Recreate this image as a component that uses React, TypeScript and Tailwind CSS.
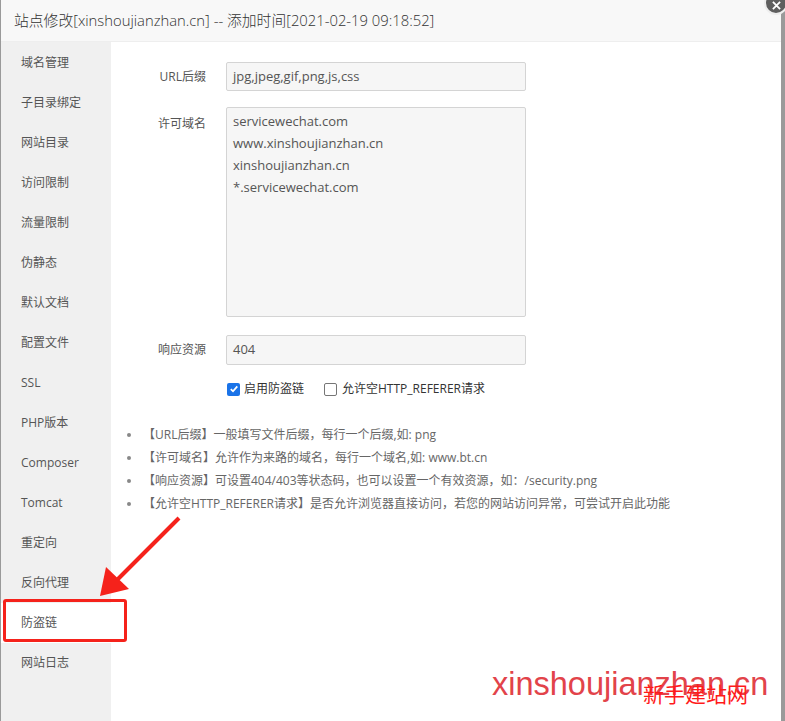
const NAV = [
  "域名管理", "子目录绑定", "网站目录", "访问限制", "流量限制", "伪静态", "默认文档", "配置文件",
  "SSL", "PHP版本", "Composer", "Tomcat", "重定向", "反向代理", "防盗链", "网站日志",
];

const TIPS = [
  "【URL后缀】一般填写文件后缀，每行一个后缀,如: png",
  "【许可域名】允许作为来路的域名，每行一个域名,如: www.bt.cn",
  "【响应资源】可设置404/403等状态码，也可以设置一个有效资源，如：/security.png",
  "【允许空HTTP_REFERER请求】是否允许浏览器直接访问，若您的网站访问异常，可尝试开启此功能",
];

const DOMAINS = ["servicewechat.com", "www.xinshoujianzhan.cn", "xinshoujianzhan.cn", "*.servicewechat.com"];

const font = "font-['Open_Sans','Noto_Sans_CJK_SC',sans-serif]";

export default function App() {
  return (
    <div className={`relative w-[785px] h-[721px] overflow-hidden flex bg-white ${font}`}>
      {/* overlay edges */}
      <div className="w-px bg-[#9a9a9a]" />

      <div className="flex-1 flex flex-col min-w-0">
        {/* Header */}
        <div className="h-[42px] shrink-0 flex items-center pl-[13px] bg-[#f8f8f8] border-b border-[#eeeeee] text-[14.8px] font-light text-[#333]">
          站点修改[xinshoujianzhan.cn] -- 添加时间[2021-02-19 09:18:52]
        </div>

        <div className="flex flex-1 min-h-0">
          {/* Sidebar */}
          <div className="w-[110px] shrink-0 bg-[#f0f0f0] pt-px">
            {NAV.map((n) => (
              <div
                key={n}
                className={`h-10 flex items-center pl-5 text-[12px] text-[#555] ${n === "防盗链" ? "bg-white" : ""}`}
              >
                {n}
              </div>
            ))}
          </div>

          {/* Content */}
          <div className="flex-1 pt-5 text-[12px] text-[#555]">
            <div className="flex items-center">
              <div className="w-[95px] text-right">URL后缀</div>
              <div className="ml-5 w-[300px] h-[29px] flex items-center px-[6px] bg-[#f6f6f6] border border-[#d4d4d4] rounded-[2px] text-[13px]">
                jpg,jpeg,gif,png,js,css
              </div>
            </div>

            <div className="flex mt-4">
              <div className="w-[95px] text-right pt-[8px]">许可域名</div>
              <div className="ml-5 w-[300px] h-[210px] pt-[2px] px-[6px] bg-[#f6f6f6] border border-[#d4d4d4] rounded-[2px] text-[13px] leading-[22px]">
                {DOMAINS.map((d) => (
                  <div key={d}>{d}</div>
                ))}
              </div>
            </div>

            <div className="flex items-center mt-[18px]">
              <div className="w-[95px] text-right">响应资源</div>
              <div className="ml-5 w-[300px] h-[30px] flex items-center px-[6px] bg-[#f6f6f6] border border-[#d4d4d4] rounded-[2px] text-[13px]">
                404
              </div>
            </div>

            <div className="flex items-center ml-[116px] mt-[16px] h-4 text-[12px] text-[#333]">
              <span className="w-[13px] h-[13px] rounded-[2px] bg-[#1a73e8] flex items-center justify-center">
                <svg width="10" height="10" viewBox="0 0 10 10">
                  <path d="M1.8 5.2 L4 7.3 L8.3 2.4" fill="none" stroke="white" strokeWidth="1.8" />
                </svg>
              </span>
              <span className="ml-[4px]">启用防盗链</span>
              <span className="ml-[20px] w-[13px] h-[13px] rounded-[2px] border border-[#767676] bg-white" />
              <span className="ml-[5px]">允许空HTTP_REFERER请求</span>
            </div>

            <ul className="mt-[29px] ml-[16px] space-y-[5px] text-[12px] text-[#666]">
              {TIPS.map((t) => (
                <li key={t} className="flex items-center h-[18px]">
                  <span className="w-[4px] h-[4px] rounded-full bg-[#888] mr-[12px]" />
                  {t}
                </li>
              ))}
            </ul>
          </div>
        </div>
      </div>

      <div className="w-[4px] bg-[#9a9a9a] mt-[10px]" />

      {/* close button */}
      <div className="absolute -top-[9px] right-[-3px] w-[24px] h-[24px] rounded-full bg-[#5f5f5f] border-2 border-[#eeeeee] flex items-end justify-center pb-[3px]">
        <svg width="9" height="9" viewBox="0 0 10 10">
          <path d="M1 1 L9 9 M9 1 L1 9" stroke="white" strokeWidth="2" />
        </svg>
      </div>

      {/* annotation box */}
      <div className="absolute left-[3px] top-[599px] w-[124px] h-[43px] border-[3px] border-[#f5221b] rounded-[3px]" />

      {/* annotation arrow */}
      <svg className="absolute left-0 top-0" width="785" height="721" viewBox="0 0 785 721">
        <line x1="179" y1="518" x2="114" y2="583" stroke="#f5221b" strokeWidth="4" />
        <path d="M100 596 L106 567 L129 589 Z" fill="#f5221b" />
      </svg>

      {/* watermark */}
      <div className="absolute left-[492px] top-[668px] text-[32.5px] leading-none text-[#e2434a] font-['Liberation_Sans',sans-serif]">
        xinshoujianzhan.cn
      </div>
      <div className="absolute left-[643px] top-[683px] text-[21px] leading-none text-[#ff1a1a] font-['Noto_Sans_CJK_SC',sans-serif]">
        新手建站网
      </div>
    </div>
  );
}
